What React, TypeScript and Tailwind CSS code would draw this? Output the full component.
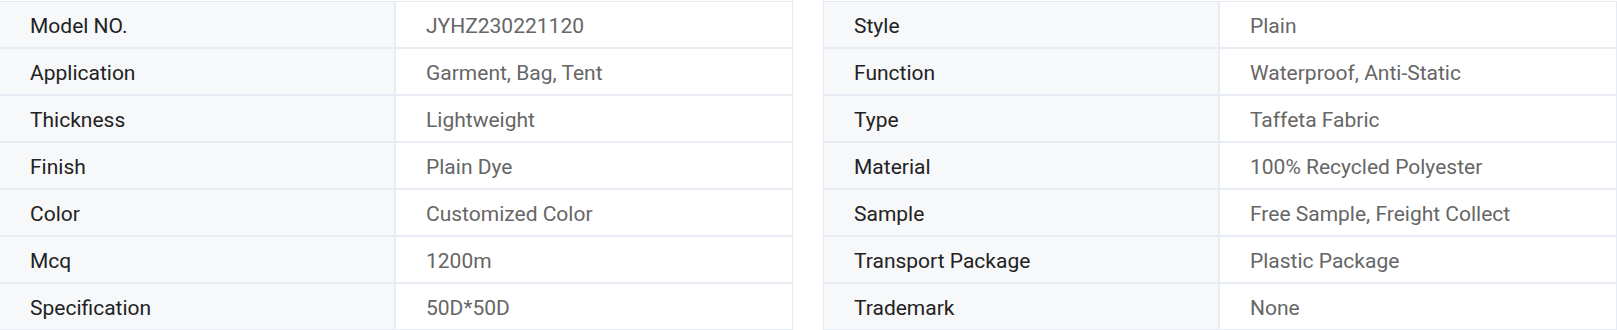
import React from 'react';

type Spec = { label: string; value: string };

const left: Spec[] = [
  { label: 'Model NO.', value: 'JYHZ230221120' },
  { label: 'Application', value: 'Garment, Bag, Tent' },
  { label: 'Thickness', value: 'Lightweight' },
  { label: 'Finish', value: 'Plain Dye' },
  { label: 'Color', value: 'Customized Color' },
  { label: 'Mcq', value: '1200m' },
  { label: 'Specification', value: '50D*50D' },
];

const right: Spec[] = [
  { label: 'Style', value: 'Plain' },
  { label: 'Function', value: 'Waterproof, Anti-Static' },
  { label: 'Type', value: 'Taffeta Fabric' },
  { label: 'Material', value: '100% Recycled Polyester' },
  { label: 'Sample', value: 'Free Sample, Freight Collect' },
  { label: 'Transport Package', value: 'Plastic Package' },
  { label: 'Trademark', value: 'None' },
];

function SpecTable({ rows, edge }: { rows: Spec[]; edge: string }) {
  return (
    <div className={`flex-1 border-t border-r border-[#e6ebf3] ${edge}`}>
      {rows.map((row) => (
        <div key={row.label} className="grid grid-cols-2 h-[47px] border-b-2 border-[#e8edf5]">
          <div className="flex items-center pl-[30px] pt-[4px] bg-[#f7f8fa] text-[#222222] border-r-2 border-[#e8edf5]">
            {row.label}
          </div>
          <div className="flex items-center pl-[30px] pt-[4px] bg-white text-[#666666]">{row.value}</div>
        </div>
      ))}
    </div>
  );
}

export default function App() {
  return (
    <div className="w-[1617px] h-[330px] bg-white pt-px font-['Roboto',sans-serif] text-[21px] leading-none">
      <div className="flex gap-[30px]">
        <SpecTable rows={left} edge="border-l-0" />
        <SpecTable rows={right} edge="border-l" />
      </div>
    </div>
  );
}
